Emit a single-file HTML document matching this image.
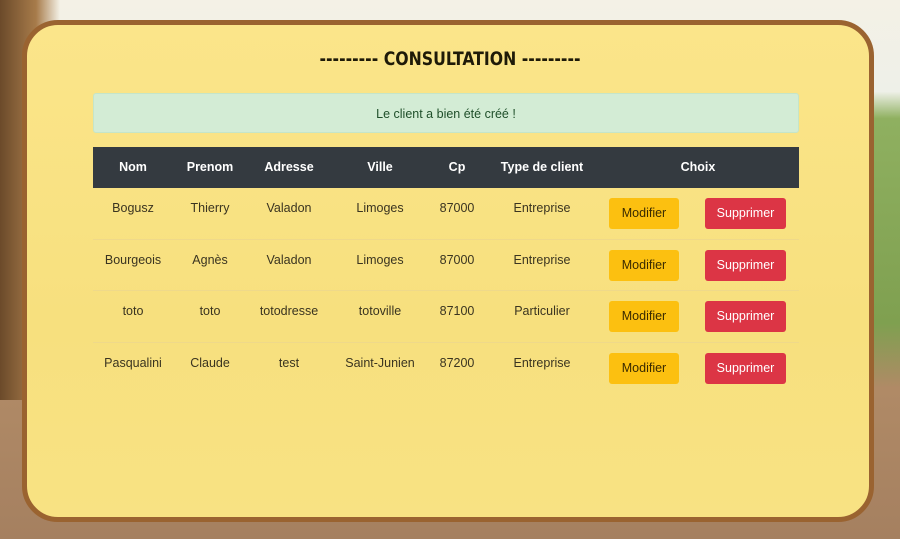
<!DOCTYPE html>
<html><head><meta charset="utf-8"><style>
*{margin:0;padding:0;box-sizing:border-box}
body{width:900px;height:539px;overflow:hidden;position:relative;font-family:"Liberation Sans",sans-serif;
background:linear-gradient(180deg,#f4f1e6 0%,#eef0e8 17%,#8fb060 22%,#7fa050 60%,#b08a66 72%,#a58060 100%);}
.tree{position:absolute;left:0;top:0;width:60px;height:400px;background:linear-gradient(90deg,#6b4a2a,#a77b4a 60%,transparent)}
.card{position:absolute;left:22px;top:20px;width:852px;height:502px;border:5px solid #9a6330;border-radius:36px;
background:linear-gradient(180deg,#fbe58a,#f7e07e 60%,#f8e283);}
.title{position:absolute;left:0;width:900px;top:48px;text-align:center;font-family:"DejaVu Sans Condensed","Liberation Sans Narrow",sans-serif;font-size:19px;color:#1e1a08;font-weight:bold;transform:scaleX(0.92)}
.alert{position:absolute;left:93px;top:93px;width:706px;height:40px;background:#d3ecd5;border:1px solid #c5e5c8;border-radius:3px;color:#1f4f2a;font-size:12.5px;text-align:center;line-height:40px}
.head{position:absolute;left:93px;top:147px;width:706px;height:41px;background:#343a40}
.c{position:absolute;transform:translateX(-50%);white-space:nowrap;font-size:12.5px}
.h{color:#fff;font-weight:bold;top:160px}
.d{color:#3a3420}
.line{position:absolute;left:93px;width:706px;height:1px;background:#efd98a}
.b{position:absolute;height:31px;border-radius:3px;font-size:12.5px;line-height:31px;text-align:center}
.m{left:609px;width:70px;background:#fcc010;color:#3a2a00}
.s{left:705px;width:81px;background:#dc3545;color:#fff}
</style></head><body>
<div class="tree"></div>
<div class="card"></div>
<div class="title">--------- CONSULTATION ---------</div>
<div class="alert">Le client a bien été créé !</div>
<div class="head"></div>
<div class="c h" style="left:133px">Nom</div>
<div class="c h" style="left:210px">Prenom</div>
<div class="c h" style="left:289px">Adresse</div>
<div class="c h" style="left:380px">Ville</div>
<div class="c h" style="left:457px">Cp</div>
<div class="c h" style="left:542px">Type de client</div>
<div class="c h" style="left:698px">Choix</div>

<div class="c d" style="left:133px;top:201px">Bogusz</div>
<div class="c d" style="left:210px;top:201px">Thierry</div>
<div class="c d" style="left:289px;top:201px">Valadon</div>
<div class="c d" style="left:380px;top:201px">Limoges</div>
<div class="c d" style="left:457px;top:201px">87000</div>
<div class="c d" style="left:542px;top:201px">Entreprise</div>
<div class="b m" style="top:198px">Modifier</div><div class="b s" style="top:198px">Supprimer</div>
<div class="line" style="top:239px"></div>

<div class="c d" style="left:133px;top:253px">Bourgeois</div>
<div class="c d" style="left:210px;top:253px">Agnès</div>
<div class="c d" style="left:289px;top:253px">Valadon</div>
<div class="c d" style="left:380px;top:253px">Limoges</div>
<div class="c d" style="left:457px;top:253px">87000</div>
<div class="c d" style="left:542px;top:253px">Entreprise</div>
<div class="b m" style="top:250px">Modifier</div><div class="b s" style="top:250px">Supprimer</div>
<div class="line" style="top:290px"></div>

<div class="c d" style="left:133px;top:304px">toto</div>
<div class="c d" style="left:210px;top:304px">toto</div>
<div class="c d" style="left:289px;top:304px">totodresse</div>
<div class="c d" style="left:380px;top:304px">totoville</div>
<div class="c d" style="left:457px;top:304px">87100</div>
<div class="c d" style="left:542px;top:304px">Particulier</div>
<div class="b m" style="top:301px">Modifier</div><div class="b s" style="top:301px">Supprimer</div>
<div class="line" style="top:342px"></div>

<div class="c d" style="left:133px;top:356px">Pasqualini</div>
<div class="c d" style="left:210px;top:356px">Claude</div>
<div class="c d" style="left:289px;top:356px">test</div>
<div class="c d" style="left:380px;top:356px">Saint-Junien</div>
<div class="c d" style="left:457px;top:356px">87200</div>
<div class="c d" style="left:542px;top:356px">Entreprise</div>
<div class="b m" style="top:353px">Modifier</div><div class="b s" style="top:353px">Supprimer</div>
</body></html>
